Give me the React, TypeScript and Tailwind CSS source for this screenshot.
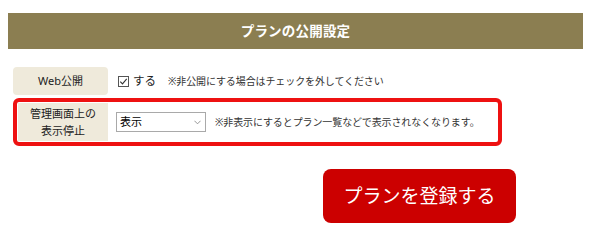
function CheckIcon() {
  return (
    <svg viewBox="0 0 11 11" className="w-[11px] h-[11px]">
      <rect x="0.5" y="0.5" width="10" height="10" fill="#fff" stroke="#555" strokeWidth="1" />
      <path d="M2.3 5.6l2.2 2.3 4.2-5" fill="none" stroke="#333" strokeWidth="1.1" />
    </svg>
  );
}

export default function App() {
  return (
    <div
      className="w-[600px] h-[240px] bg-white text-[#222] overflow-hidden"
      style={{ fontFamily: '"Noto Sans", "Noto Sans CJK JP", sans-serif' }}
    >
      <div className="mt-[13px] ml-[8px] w-[575px] h-[36px] bg-[#8b7e51] flex items-center justify-center">
        <h2 className="text-white font-bold text-[13.5px] tracking-[0.2px]">プランの公開設定</h2>
      </div>

      <div className="mt-[18px] ml-[13px] flex items-center">
        <div className="w-[95px] h-[28px] bg-[#efeadb] rounded-[4px] flex items-center justify-center text-[11px]">
          Web公開
        </div>
        <label className="ml-[10px] flex items-center text-[11.5px]">
          <CheckIcon />
          <span className="ml-[4px]">する</span>
        </label>
        <p className="ml-[12px] text-[10px] tracking-[-0.1px] text-[#333]">※非公開にする場合はチェックを外してください</p>
      </div>

      <div className="mt-[3px] ml-[13px] w-[489px] h-[48px] border-[4px] border-[#ee1111] rounded-[6px] p-[1px] flex items-center">
        <div className="w-[90px] h-full bg-[#efeadb] flex flex-col items-center justify-center text-[11px] leading-[17px]">
          <span>管理画面上の</span>
          <span>表示停止</span>
        </div>
        <div className="ml-[8px] w-[90px] h-[20px] border border-[#a9a9a9] bg-white flex items-center justify-between pl-[3px] pr-[4px] text-[11px] text-black">
          <span>表示</span>
          <svg viewBox="0 0 8 5" className="w-[7px] h-[5px]">
            <path d="M0.5 0.5l3.5 3.5 3.5-3.5" fill="none" stroke="#888" strokeWidth="1" />
          </svg>
        </div>
        <p className="ml-[9px] text-[10px] tracking-[-0.1px] text-[#333]">※非表示にするとプラン一覧などで表示されなくなります。</p>
      </div>

      <div className="mt-[23px] ml-[323px]">
        <button className="w-[193px] h-[54px] bg-[#cc0000] rounded-[8px] text-white text-[19px]">
          プランを登録する
        </button>
      </div>
    </div>
  );
}
